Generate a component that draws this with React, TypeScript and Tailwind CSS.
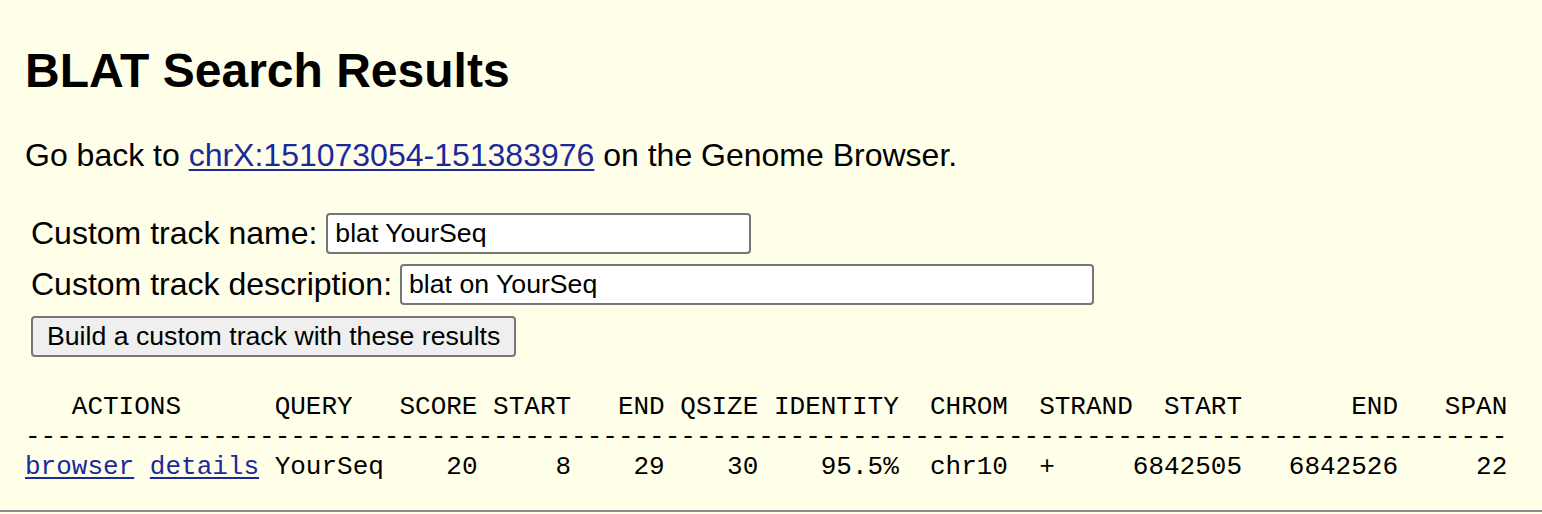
const header =
  "   ACTIONS      QUERY   SCORE START   END QSIZE IDENTITY  CHROM  STRAND  START       END   SPAN";
const dashes = "-".repeat(95);
const rest =
  " YourSeq    20     8    29    30    95.5%  chr10  +     6842505   6842526     22";

export default function App() {
  return (
    <div className="min-h-[514px] bg-[#fffee8] font-['Liberation_Sans',Arial,sans-serif] text-black">
      <div className="px-[25px]">
        <h2 className="pt-[43px] text-[48px] font-bold leading-[55px]">BLAT Search Results</h2>

        <p className="mt-[39px] text-[32px] leading-[37px]">
          Go back to{" "}
          <a href="#" className="text-[#1a2a9c] underline decoration-2 underline-offset-[3px]">
            chrX:151073054-151383976
          </a>{" "}
          on the Genome Browser.
        </p>

        <form className="mt-[39px] flex flex-col items-start gap-[10px] pl-[6px]">
          <label className="flex items-center gap-[9px] text-[32px] leading-[37px]">
            Custom track name:
            <input
              defaultValue="blat YourSeq"
              className="h-[41px] w-[425px] rounded-[4px] border-2 border-[#767676] bg-white px-[7px] text-[26.67px] outline-none"
            />
          </label>
          <label className="flex items-center gap-[8px] text-[32px] leading-[37px]">
            Custom track description:
            <input
              defaultValue="blat on YourSeq"
              className="h-[41px] w-[694px] rounded-[4px] border-2 border-[#767676] bg-white px-[7px] text-[26.67px] outline-none"
            />
          </label>
          <button
            type="button"
            className="mt-px h-[41px] whitespace-nowrap rounded-[4px] border-2 border-[#767676] bg-[#efefef] px-[14px] text-[26.67px] leading-none"
          >
            Build a custom track with these results
          </button>
        </form>

        <pre className="mt-[35px] font-['Liberation_Mono','Courier_New',monospace] text-[26px] leading-[30px]">
          {header}
          {"\n"}
          {dashes}
          {"\n"}
          <a href="#" className="text-[#1a2a9c] underline decoration-2 underline-offset-[3px]">browser</a>{" "}
          <a href="#" className="text-[#1a2a9c] underline decoration-2 underline-offset-[3px]">details</a>
          {rest}
        </pre>
      </div>
      <div className="mt-[28px] border-t-2 border-[#8c8c8c]" />
    </div>
  );
}
